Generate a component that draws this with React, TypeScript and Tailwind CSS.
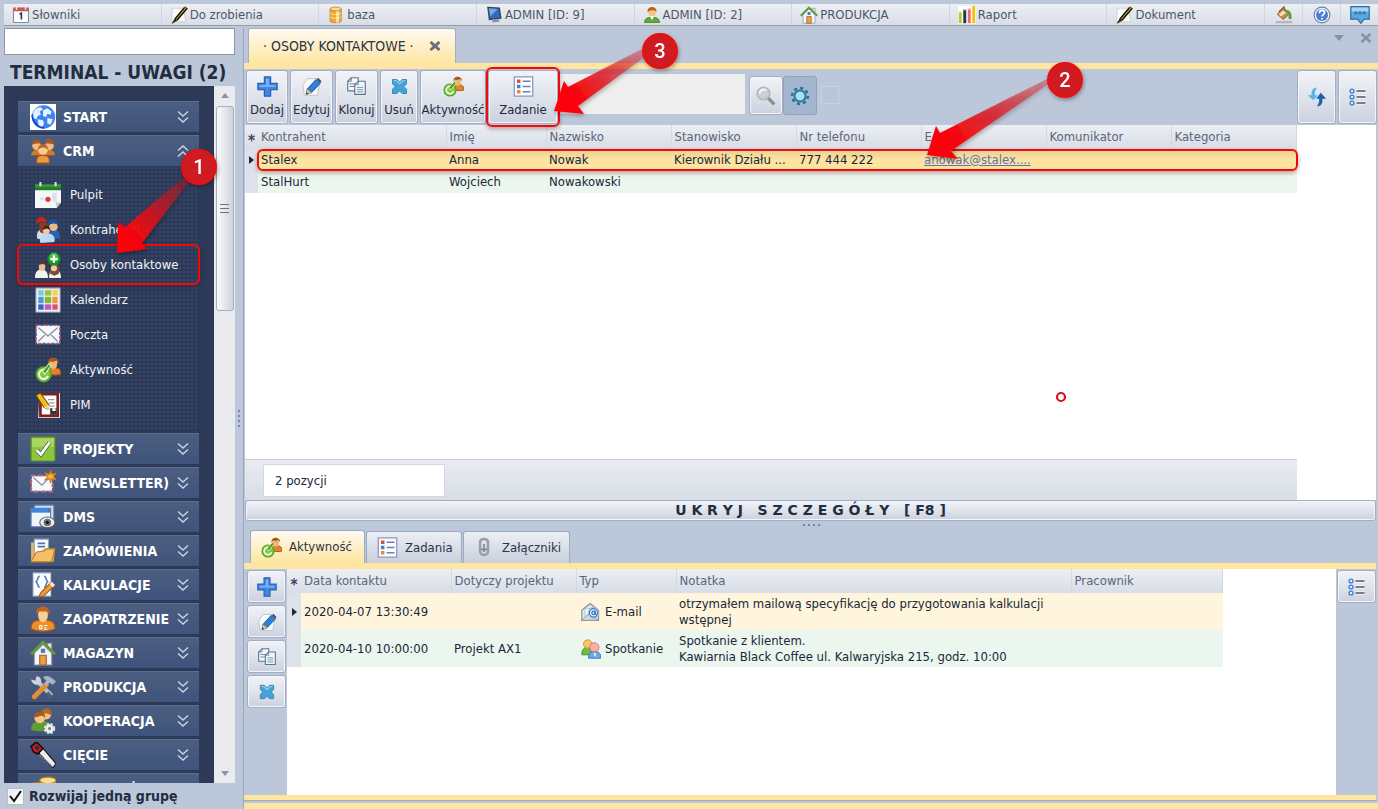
import type { ReactNode } from "react";
import clsx from "clsx";

type IconProps = { className?: string };

function Svg({ className = "size-6", children }: { className?: string; children: ReactNode }) {
    return (
        <svg viewBox="0 0 24 24" className={clsx("shrink-0", className)} fill="none" aria-hidden="true">
            {children}
        </svg>
    );
}

/* ---------- icons ---------- */

const CalendarPage = (p: IconProps) => (
    <Svg {...p}>
        <rect x="2" y="3" width="20" height="19" rx="1" fill="#fff" stroke="#7d8da8" strokeWidth="1.5" />
        <rect x="2" y="2" width="20" height="5" fill="#c8584c" />
        <path d="M6 1v4M18 1v4" stroke="#eee" strokeWidth="2" />
        <path d="M10 11l2.500-1.500V18" stroke="#2a3e66" strokeWidth="2.200" />
    </Svg>
);

const NotePen = (p: IconProps) => (
    <Svg {...p}>
        <path d="M3 3h15l3 18H2z" fill="#fafafa" stroke="#c3c7cd" />
        <path d="M20 1L7 16l-4 7 7-4L23 3z" fill="#e0b52c" stroke="#4a3a10" />
        <path d="M19.500 2L7 17M23 3L9 19" stroke="#17171a" strokeWidth="1.800" />
        <path d="M7 16l-4 7 6-4z" fill="#222" />
    </Svg>
);

const DbBarrel = (p: IconProps) => (
    <Svg {...p}>
        <path d="M4 4v16c0 3 15 3 15 0V4z" fill="#f0a93c" stroke="#c1791c" />
        <path d="M12 3h4v19h-4z" fill="#fbe0a0" />
        <ellipse cx="11.500" cy="4" rx="7.500" ry="2.500" fill="#ffd98a" stroke="#c1791c" />
        <path d="M4 9c0 3 15 3 15 0M4 14c0 3 15 3 15 0" stroke="#fff3d2" />
    </Svg>
);

const Monitor = (p: IconProps) => (
    <Svg {...p}>
        <path d="M4 2l15 1 2 13-15 2z" fill="#2e6cc4" stroke="#3a4254" strokeWidth="2" />
        <path d="M5 3l12 1-10 10z" fill="#6fa8ea" />
        <path d="M9 18l8-1 3 4-10 1z" fill="#8d97a8" />
    </Svg>
);

const UserGreen = (p: IconProps) => (
    <Svg {...p}>
        <path d="M2 22c0-6 5-7 10-7s10 1 10 7z" fill="#5fa83a" stroke="#3f7d24" />
        <path d="M9 13h6l-3 6z" fill="#fff" />
        <circle cx="12" cy="8" r="5.500" fill="#f4c48c" />
        <path d="M6 8c-1-9 13-9 12 0-2-3-8-3-12 0z" fill="#b9641f" />
    </Svg>
);

const House = (p: IconProps) => (
    <Svg {...p}>
        <path d="M16 3h4v6h-4z" fill="#e8ecf2" stroke="#8a93a5" />
        <path d="M4 12l8-8 8 8v11H4z" fill="#f4f6fb" stroke="#8d98ac" />
        <path d="M1 13L12 2l11 11" stroke="#5f9e2e" strokeWidth="2.500" />
        <path d="M10 8h4v4h-4z" fill="#4b7cc4" />
        <path d="M9 14h6v9H9z" fill="#e8a04a" stroke="#a5611c" />
    </Svg>
);

const ReportBars = (p: IconProps) => (
    <Svg {...p}>
        <path d="M0 0h24v24H0z" fill="#fff" />
        <path d="M3 7v16" stroke="#b5c832" strokeWidth="4" />
        <path d="M9 4v19" stroke="#223a48" strokeWidth="4" />
        <path d="M15 3v20" stroke="#ea6f66" strokeWidth="4" />
        <path d="M21 0v23" stroke="#f2c40f" strokeWidth="4" />
        <path d="M1 8h4M7 5h4M13 4h4" stroke="#fff" strokeWidth="1.500" />
    </Svg>
);

const PaintBucket = (p: IconProps) => (
    <Svg {...p}>
        <path d="M1 20h22v3H1z" fill="#b4b7bb" />
        <path d="M11 3l9 7-9 8-8-7z" fill="#c98b4a" stroke="#7a4a1c" />
        <path d="M5 8l7-7 2 8" stroke="#8c5a26" strokeWidth="1.500" />
        <path d="M13 5c6 0 10 3 9 12-1 1-3 1-4-1 1-5-1-7-5-8z" fill="#5ba12f" />
        <path d="M5 11l6-5 4 3-7 5z" fill="#f6dfb8" />
    </Svg>
);

const HelpBall = (p: IconProps) => (
    <Svg {...p}>
        <circle cx="12" cy="12" r="10.500" fill="#f1f5fb" stroke="#6c80ad" strokeWidth="1.500" />
        <circle cx="12" cy="12" r="8" fill="#4c7fd0" />
        <path d="M8.500 9.500c0-5 7-4.500 7-.5 0 2.500-3.500 2.500-3.500 5" stroke="#fff" strokeWidth="2.200" />
        <path d="M11 16h2.200v2H11z" fill="#fff" />
    </Svg>
);

const ChatBubble = (p: IconProps) => (
    <Svg {...p}>
        <path d="M1 2h22v15h-6l-4 5-4-5H1z" fill="#5ca8dc" stroke="#2d6ea6" strokeWidth="1.500" />
        <path d="M2 3h20v5H2z" fill="#a5d4f1" />
        <circle cx="7" cy="9.500" r="1.500" stroke="#1f5c96" />
        <circle cx="12" cy="9.500" r="1.500" stroke="#1f5c96" />
        <circle cx="17" cy="9.500" r="1.500" stroke="#1f5c96" />
    </Svg>
);

const PlusBlue = (p: IconProps) => (
    <Svg {...p}>
        <path d="M8.500 1h7v7.500H23v7h-7.500V23h-7v-7.500H1v-7h7.500z" fill="#4387e2" stroke="#2b62b8" strokeWidth="1.500" />
        <path d="M10.500 3h3v7.500H21v2H3v-2h7.500z" fill="#79b4f4" />
    </Svg>
);

const EditPage = (p: IconProps) => (
    <Svg {...p}>
        <path d="M7 3h11l3 6-2 13H4L2 11z" fill="#fafafa" stroke="#b9bdc4" />
        <path d="M17 4L7 15l-1 6 6-2L22 8.500z" fill="#2f80d8" stroke="#1d559c" />
        <path d="M6 21l1-6 5 4z" fill="#f0c489" />
        <path d="M18 4l4 4 1.500-2-4-4z" fill="#3f4f68" />
        <path d="M6 21l.5-2.500 2 1.700z" fill="#222" />
    </Svg>
);

const ClonePages = (p: IconProps) => (
    <Svg {...p}>
        <path d="M6 2h8v15H2V6z" fill="#f4f7fa" stroke="#5f7488" strokeWidth="1.300" />
        <path d="M6 2v4H2M4 9h7M4 12h6" stroke="#5f7488" />
        <path d="M14 6h8v15H10V10z" fill="#f4f7fa" stroke="#5f7488" strokeWidth="1.300" />
        <path d="M14 6v4h-4M12.500 13h7M12.500 15.500h7M12.500 18h7" stroke="#5b8db5" />
    </Svg>
);

const CrossBlue = (p: IconProps) => (
    <Svg {...p}>
        <path
            d="M4 4h5l3 3 3-3h5v5l-3 3 3 3v5h-5l-3-3-3 3H4v-5l3-3-3-3z"
            fill="#44a3d4"
            stroke="#2f81b0"
        />
        <path d="M5.500 5.500h3L12 9l3.500-3.500h3" stroke="#8fcdea" strokeWidth="1.500" />
    </Svg>
);

const Activity = (p: IconProps) => (
    <Svg {...p}>
        <path d="M11 15c0-5 3-5 6-5s7 0 7 6c-4 1-9 1-13-1z" fill="#e0852c" stroke="#a4530f" />
        <path d="M13 4c0-4 8-4 8 0l-1 5c-1 3-5 3-6 0z" fill="#eeb377" />
        <path d="M12 6c-1-7 10-7 10 0l-2-2.500-4 1-2-.5z" fill="#a5571e" />
        <circle cx="8" cy="16" r="7.500" fill="#58a828" />
        <circle cx="8" cy="16" r="6" fill="#86c844" />
        <path d="M11.500 13.500a4.300 4.300 0 1 0 .5 4" stroke="#f6fbef" strokeWidth="1.800" />
        <path d="M7 13l2 3 6-8-2-2z" fill="#4b9a22" stroke="#d9f0bd" />
    </Svg>
);

const TaskList = (p: IconProps) => (
    <Svg {...p}>
        <rect x="1.500" y="1" width="21" height="22" fill="#fdfdff" stroke="#8f9bc4" strokeWidth="1.500" />
        <path d="M4.500 4h4v4h-4z" fill="#d8503f" />
        <path d="M4.500 10h4v4h-4z" fill="#3b82d8" />
        <path d="M4.500 16h4v4h-4z" fill="#e88a2c" />
        <path d="M11 6h9M11 12h9M11 18h9" stroke="#6a7fc0" strokeWidth="1.700" />
    </Svg>
);

const Magnifier = (p: IconProps) => (
    <Svg {...p}>
        <path d="M14 14l8 8" stroke="#8b8f95" strokeWidth="4" />
        <circle cx="9" cy="9" r="7.500" fill="#cdd0d4" stroke="#b3b7bc" strokeWidth="2" />
        <path d="M4.500 9c0-4 4-6 8-4" stroke="#f4f5f6" strokeWidth="2.500" />
    </Svg>
);

const Gear = (p: IconProps) => (
    <Svg {...p}>
        <circle cx="12" cy="12" r="9.500" stroke="#1f7391" strokeWidth="3" strokeDasharray="3.500 3.960" />
        <circle cx="12" cy="12" r="6.500" fill="#c3d4e6" stroke="#2586a8" strokeWidth="3" />
        <circle cx="12" cy="12" r="4.800" stroke="#a9e0f0" />
    </Svg>
);

const Refresh = (p: IconProps) => (
    <Svg {...p}>
        <path d="M12 1C7 1 5 4 5.500 10H1l6.500 6L13 10H9.500C9 6 10 4 12 1z" fill="#57b4e6" />
        <path d="M12 23c5 0 7-3 6.500-9H23l-6.500-7L11 14h3.500c.5 4-.5 6-2.500 9z" fill="#1767ae" />
    </Svg>
);

const OptionsList = (p: IconProps) => (
    <Svg {...p}>
        <path d="M10 4h12M10 12h12M10 20h12" stroke="#fff" strokeWidth="4" />
        <path d="M10 4h12M10 12h12M10 20h12" stroke="#4e5361" strokeWidth="1.700" />
        <circle cx="4" cy="4" r="2.600" fill="#d9ecfd" stroke="#3c7fd0" strokeWidth="1.700" />
        <circle cx="4" cy="12" r="2.600" fill="#d9ecfd" stroke="#3c7fd0" strokeWidth="1.700" />
        <circle cx="4" cy="20" r="2.600" fill="#d9ecfd" stroke="#3c7fd0" strokeWidth="1.700" />
    </Svg>
);

const Globe = (p: IconProps) => (
    <Svg {...p}>
        <path d="M0 0h24v24H0z" fill="#fff" />
        <circle cx="12.500" cy="12" r="10.800" fill="#3f83f0" />
        <path d="M3 8c1-3 4-5 7-5l2 2-3 2 1 3-3 1-1 3-3-1zM12 6l4-2 4 3-1 3-3-1-1 3-3-1zM7 14l5 1 1 3-2 4-3-2zM16 13l5 1-2 5-3-1z" fill="#e4f1ff" />
        <path d="M2 10c0 6 5 12 11 12" stroke="#1744b4" strokeWidth="1.500" />
    </Svg>
);

const CrmGroup = (p: IconProps) => (
    <Svg {...p}>
        <path d="M1 16c0-4 3-5 6-5h10c3 0 6 1 6 5z" fill="#d9781d" />
        <path d="M6 23c0-6 2-7 6-7s6 1 6 7z" fill="#ef9a3c" stroke="#b0580f" />
        <circle cx="6" cy="7" r="4" fill="#f0bb83" />
        <circle cx="18" cy="7" r="4" fill="#f0bb83" />
        <circle cx="12" cy="11" r="4.500" fill="#f8cc97" />
        <path d="M2 6c0-6 8-6 8-1H6zM14 5c0-6 8-6 8 1l-4-1z" fill="#a45a22" />
        <path d="M7.500 11c-1-7 10-7 9 0-3-3-6-3-9 0z" fill="#b86a2c" />
    </Svg>
);

const GreenCalendar = (p: IconProps) => (
    <Svg {...p}>
        <path d="M0 3h24v16l-4 5H0z" fill="#f5f6f8" />
        <path d="M0 2h24v5.500H0z" fill="#2f9a36" />
        <path d="M0 5h24v2.500H0z" fill="#237a29" />
        <path d="M5 0v4M19 0v4" stroke="#d9dde2" strokeWidth="2" />
        <path d="M5 14h3v3H5zM16 10h4v8h-4z" fill="#e3dcec" />
        <circle cx="12" cy="16" r="2.500" fill="#cf3f44" />
        <path d="M24 19h-5l1 5z" fill="#c3c7cc" />
    </Svg>
);

const Contractors = (p: IconProps) => (
    <Svg {...p}>
        <path d="M2 20c-1-7 2-9 6-9l3 10z" fill="#d9dce4" />
        <path d="M13 20c0-7 2-9 5-9 4 0 5 5 5 9z" fill="#2b62b8" />
        <path d="M5 24c-2-6 2-9 6-9s8 2 7 8z" fill="#b9d9f4" />
        <path d="M4 7c0-3 6-3 7 0v5c-2 4-6 4-7 0z" fill="#8a3f28" />
        <circle cx="17" cy="9" r="4" fill="#edb98a" />
        <path d="M1 6c0-8 10-7 10-1L7 4z" fill="#d0211c" />
        <path d="M12 7c0-7 9-7 10 0l-5-1z" fill="#1f4f9e" />
        <ellipse cx="10.500" cy="12" rx="3.200" ry="4" fill="#f3c79e" />
        <path d="M7 12c0-6 7-6 7 0l-3-1.500z" fill="#4a2a16" />
    </Svg>
);

const Contacts = (p: IconProps) => (
    <Svg {...p}>
        <path d="M0 24c0-6 3-8 6-8s6 2 6 8zM13 24c0-6 2-8 5-8s6 2 6 8z" fill="#f2f2f2" />
        <ellipse cx="6.500" cy="13.500" rx="3" ry="4" fill="#e9bf9b" />
        <path d="M3 12c0-5 7-5 7 0l-3-1z" fill="#5b3a28" />
        <path d="M14 20c0-9 1-9 4-9s5 1 4 9l-4 2z" fill="#7a4d33" />
        <circle cx="17.500" cy="15" r="2.800" fill="#f0c8a6" />
        <circle cx="17.500" cy="6.500" r="6" fill="#16981f" />
        <circle cx="17.500" cy="5" r="4" fill="#44c44c" />
        <path d="M17.500 3v7M14 6.500h7" stroke="#fff" strokeWidth="2" />
    </Svg>
);

const ColorCalendar = (p: IconProps) => (
    <Svg {...p}>
        <path d="M1 1h22v22H1z" fill="#f1f3f8" stroke="#c0c8d8" />
        <path d="M3 3h5v5H3z" fill="#6fd0e4" />
        <path d="M9 3h6v5H9z" fill="#9bc840" />
        <path d="M16 3h5v5h-5z" fill="#f4d44c" />
        <path d="M3 9h5v6H3z" fill="#4b9ae4" />
        <path d="M9 9h6v6H9z" fill="#84b83c" />
        <path d="M16 9h5v6h-5z" fill="#f09a3c" />
        <path d="M3 16h5v5H3z" fill="#3c5fc0" />
        <path d="M9 16h6v5H9z" fill="#b85cc4" />
        <path d="M16 16h5v5h-5z" fill="#e2506a" />
    </Svg>
);

const Envelope = (p: IconProps) => (
    <Svg {...p}>
        <path d="M1 3h22v17H1z" fill="#f7f8fb" />
        <path d="M1 3h22v17H1z" stroke="#d0565a" strokeWidth="1.500" strokeDasharray="3 5" />
        <path d="M1 3h22v17H1z" stroke="#4b68b4" strokeWidth="1.500" strokeDasharray="3 5" strokeDashoffset="4" />
        <path d="M3 5l9 8 9-8M3 18l6-6M21 18l-6-6" stroke="#8a93a8" strokeWidth="1.200" />
    </Svg>
);

const Pim = (p: IconProps) => (
    <Svg {...p}>
        <path d="M4 1h19v23H3z" fill="#fff" />
        <path d="M5 2h16v20H5z" fill="#fff" stroke="#7c2020" strokeWidth="2.500" />
        <path d="M12 7h6M13 10h5M14 13h4" stroke="#9a9aa2" />
        <path d="M1 3l4-2 8 11-1 4-4-2z" fill="#f6bd18" stroke="#7a4e08" />
        <path d="M13 12l-5 2 6 3z" fill="#f0d4a8" />
        <path d="M14 15h6v6h-6z" fill="#33343c" />
        <path d="M16 15h3v2.500h-3z" fill="#fff" />
    </Svg>
);

const GreenCheck = (p: IconProps) => (
    <Svg {...p}>
        <rect x="1" y="1" width="22" height="22" rx="1" fill="#8cc63e" stroke="#5d9420" />
        <path d="M2 2h20v8H2z" fill="#aad663" />
        <path d="M6 13l4 4L18 6" stroke="#4f6b3a" strokeWidth="4" />
        <path d="M6 13l4 4L18 6" stroke="#fff" strokeWidth="2.500" />
    </Svg>
);

const Newsletter = (p: IconProps) => (
    <Svg {...p}>
        <path d="M1 5h20v15H1z" fill="#f7f8fb" />
        <path d="M1 5h20v15H1z" stroke="#d0565a" strokeWidth="2" strokeDasharray="3 4" />
        <path d="M1 5h20v15H1z" stroke="#4b68b4" strokeWidth="1.500" strokeDasharray="3 4" strokeDashoffset="3.500" />
        <path d="M3 7l8 7 7-7" stroke="#8a93a8" strokeWidth="1.200" />
        <path d="M19 0l1 4 4-1-2.500 3L24 9l-4-1-1 4-1-4-4 1 2.500-3L14 3l4 1z" fill="#f7b23b" stroke="#d07a12" />
    </Svg>
);

const Dms = (p: IconProps) => (
    <Svg {...p}>
        <path d="M4 1h18v15H4z" fill="#c9dcf2" stroke="#5a80b8" />
        <path d="M1 4h18v17H1z" fill="#eef4fb" stroke="#5a80b8" />
        <path d="M1 4h18v4H1z" fill="#3f86dc" />
        <path d="M17 6h1.500" stroke="#e03a2c" strokeWidth="2" />
        <ellipse cx="16" cy="17" rx="7" ry="5" fill="#f3f0ea" stroke="#6b5a4c" />
        <circle cx="16" cy="17" r="3.500" fill="#5d7694" />
        <circle cx="16" cy="17" r="1.500" fill="#111" />
    </Svg>
);

const FolderDoc = (p: IconProps) => (
    <Svg {...p}>
        <path d="M1 4h5v18H1z" fill="#e8b45c" />
        <path d="M4 1h13v16H4z" fill="#fafcff" stroke="#8fa3c4" />
        <path d="M7 5h7M7 8h7" stroke="#4f74b4" strokeWidth="1.500" />
        <path d="M13 10h10l-1 12H1z" fill="#e8a446" />
        <path d="M6 13l7-1 2-2h8l-3 12H1z" fill="#f3bf68" stroke="#bf7c20" />
    </Svg>
);

const Calculations = (p: IconProps) => (
    <Svg {...p}>
        <path d="M3 1h16v21H3z" fill="#fafcff" stroke="#c6d0e0" />
        <path d="M9 4c-3 0-1 5-4 5 3 0 1 5 4 5M13 4c3 0 1 5 4 5-3 0-1 5-4 5" stroke="#5a82b8" strokeWidth="1.500" />
        <path d="M20 9l3 3L13 22l-5 1 2-4z" fill="#ec9c3c" stroke="#a85f14" />
        <path d="M20 9l3 3-2 2-3-3z" fill="#f4ede4" />
    </Svg>
);

const Supplier = (p: IconProps) => (
    <Svg {...p}>
        <path d="M1 21c0-7 4-8 11-8s11 1 11 8c-5 3-17 3-22 0z" fill="#ec8f2c" stroke="#a8560c" />
        <ellipse cx="12" cy="8.500" rx="4.500" ry="6.500" fill="#f7cf96" />
        <path d="M6 8c-2-10 14-10 12 0l-2-3H8z" fill="#c0661c" />
        <path d="M9 18h2v3H9zM13 18h3M13 20h2M13 21.500h3" stroke="#fff" />
    </Svg>
);

const Tools = (p: IconProps) => (
    <Svg {...p}>
        <path d="M7 7l13 13" stroke="#b4bfcc" strokeWidth="4" />
        <path d="M1 5l4 1 1-4c4 0 5 4 4 7-3 2-8 1-9-4z" fill="#cdd6e0" />
        <path d="M20 22l-4-5" stroke="#55606e" strokeWidth="3" />
        <path d="M4 21L15 10" stroke="#e5902c" strokeWidth="4.500" strokeLinecap="round" />
        <path d="M12 3c4-3 8 0 12 4l-3 3-3-2-3 3-2-2 2-3z" fill="#a7b5c4" />
    </Svg>
);

const Cooperation = (p: IconProps) => (
    <Svg {...p}>
        <path d="M1 20c0-7 5-8 10-8s9 2 9 8c-5 2-14 2-19 0z" fill="#5f9c34" />
        <circle cx="15" cy="6" r="4.500" fill="#f1bf88" />
        <path d="M11 5c0-7 10-6 9 2l-4-2z" fill="#b56625" />
        <circle cx="9" cy="9" r="5" fill="#f4c48c" />
        <path d="M4 9c0-8 10-8 10 0l-3-2z" fill="#a9581c" />
        <circle cx="18" cy="19" r="4" fill="#eef1f4" stroke="#dfe3e8" strokeWidth="2.500" strokeDasharray="2 1.200" />
        <circle cx="18" cy="19" r="1.500" fill="#7b838c" />
    </Svg>
);

const Saw = (p: IconProps) => (
    <Svg {...p}>
        <path d="M7 9l5-3 12 14-3 4z" fill="#eceef0" stroke="#16181c" />
        <path d="M9 12l12 11" stroke="#8c9096" strokeDasharray="1.500 1" strokeWidth="1.500" />
        <path d="M1 4l5-4 6 6-5 5-4-2z" fill="#d4191c" stroke="#1c0a0a" strokeWidth="1.500" />
        <path d="M4 4l3-1 2 3-3 2z" fill="#24304c" />
    </Svg>
);

const Coins = (p: IconProps) => (
    <Svg {...p}>
        <path d="M9 4v10h15V4z" fill="#e8a93c" />
        <ellipse cx="16.500" cy="4" rx="7.500" ry="3" fill="#fbe08c" stroke="#b97714" />
        <path d="M0 9v12h14V9z" fill="#e8a93c" />
        <ellipse cx="7" cy="9" rx="7" ry="3" fill="#fbe08c" stroke="#b97714" />
    </Svg>
);

const Clip = (p: IconProps) => (
    <Svg {...p}>
        <path d="M7 16V6c0-5 9-5 9 0v10c0 6-9 6-9 0v-3" stroke="#9c9fa4" strokeWidth="3" />
        <path d="M11.500 8v9M8 14h7" stroke="#85888d" strokeWidth="2" />
    </Svg>
);

const MailAt = (p: IconProps) => (
    <Svg {...p}>
        <path d="M1 10l10-8 10 8v12H1z" fill="#e6e9ed" stroke="#8d95a0" strokeWidth="1.500" />
        <path d="M5 8h13v12H5z" fill="#fff" stroke="#b2b9c2" />
        <path d="M1 22l8-8 12 8z" fill="#d3d8de" stroke="#8d95a0" />
        <circle cx="15" cy="13" r="6.500" fill="#e3effb" stroke="#8fb2d8" />
        <circle cx="15" cy="13" r="5" stroke="#3f7fc4" strokeWidth="1.500" />
        <circle cx="15" cy="13" r="2" stroke="#2f6fb8" strokeWidth="1.500" />
        <path d="M17 10.500v4l2 .5" stroke="#2f6fb8" strokeWidth="1.300" />
    </Svg>
);

const Meeting = (p: IconProps) => (
    <Svg {...p}>
        <path d="M1 19c0-7 3-9 7-9s6 2 6 9z" fill="#6dbb45" stroke="#3f8a22" />
        <circle cx="8" cy="6" r="5" fill="#f6c56a" stroke="#d08a2c" />
        <path d="M9 23c0-7 3-8 7-8s8 1 8 8z" fill="#6fa8ec" stroke="#2f66b4" />
        <circle cx="16" cy="10" r="5.500" fill="#f7b3a8" stroke="#d4665c" />
        <path d="M15 17l2 5 1-5z" fill="#fff" />
    </Svg>
);

function Chevrons({ up }: { up?: boolean }) {
    return (
        <svg viewBox="0 0 12 14" className={clsx("h-3.5 w-3 shrink-0", up && "rotate-180")} fill="none" aria-hidden="true">
            <path d="M1 1.500l5 4.500 5-4.500M1 7.500l5 4.500 5-4.500" stroke="#c9d2e2" strokeWidth="1.500" />
        </svg>
    );
}

/* ---------- data ---------- */

const menu = [
    { label: "Słowniki", icon: CalendarPage },
    { label: "Do zrobienia", icon: NotePen },
    { label: "baza", icon: DbBarrel },
    { label: "ADMIN [ID: 9]", icon: Monitor },
    { label: "ADMIN [ID: 2]", icon: UserGreen },
    { label: "PRODUKCJA", icon: House },
    { label: "Raport", icon: ReportBars },
    { label: "Dokument", icon: NotePen },
];

const crmItems = [
    { label: "Pulpit", icon: GreenCalendar },
    { label: "Kontrahenci", icon: Contractors },
    { label: "Osoby kontaktowe", icon: Contacts, marked: true },
    { label: "Kalendarz", icon: ColorCalendar },
    { label: "Poczta", icon: Envelope },
    { label: "Aktywność", icon: Activity },
    { label: "PIM", icon: Pim },
];

const groups = [
    { label: "PROJEKTY", icon: GreenCheck },
    { label: "(NEWSLETTER)", icon: Newsletter },
    { label: "DMS", icon: Dms },
    { label: "ZAMÓWIENIA", icon: FolderDoc },
    { label: "KALKULACJE", icon: Calculations },
    { label: "ZAOPATRZENIE", icon: Supplier },
    { label: "MAGAZYN", icon: House },
    { label: "PRODUKCJA", icon: Tools },
    { label: "KOOPERACJA", icon: Cooperation },
    { label: "CIĘCIE", icon: Saw },
    { label: "SPRZEDAŻ", icon: Coins },
];

const toolbar = [
    { label: "Dodaj", icon: PlusBlue, width: "w-[42px]" },
    { label: "Edytuj", icon: EditPage, width: "w-[43px]" },
    { label: "Klonuj", icon: ClonePages, width: "w-[43px]" },
    { label: "Usuń", icon: CrossBlue, width: "w-[38px]" },
    { label: "Aktywność", icon: Activity, width: "w-[66px]" },
    { label: "Zadanie", icon: TaskList, width: "w-[70px]", marked: true },
];

const contactColumns = ["Kontrahent", "Imię", "Nazwisko", "Stanowisko", "Nr telefonu", "E-mail", "Komunikator", "Kategoria"];

const contacts = [
    ["Stalex", "Anna", "Nowak", "Kierownik Działu ...", "777 444 222", "anowak@stalex....", "", ""],
    ["StalHurt", "Wojciech", "Nowakowski", "", "", "", "", ""],
];

const detailTabs = [
    { label: "Aktywność", icon: Activity, width: "w-[115px]", active: true },
    { label: "Zadania", icon: TaskList, width: "w-24" },
    { label: "Załączniki", icon: Clip, width: "w-[107px]" },
];

const activityColumns = ["Data kontaktu", "Dotyczy projektu", "Typ", "Notatka", "Pracownik"];

const activities = [
    {
        date: "2020-04-07 13:30:49",
        project: "",
        type: "E-mail",
        icon: MailAt,
        note: ["otrzymałem mailową specyfikację do przygotowania kalkulacji", "wstępnej"],
    },
    {
        date: "2020-04-10 10:00:00",
        project: "Projekt AX1",
        type: "Spotkanie",
        icon: Meeting,
        note: ["Spotkanie z klientem.", "Kawiarnia Black Coffee ul. Kalwaryjska 215, godz. 10:00"],
    },
];

/* ---------- shared styles ---------- */

const raised =
    "rounded-[3px] border border-[#a3aec2] bg-linear-to-b from-[#f1f3f7] via-[#dfe3eb] to-[#cbd1df] shadow-[inset_0_0_0_1px_#f3f5f9]";
const headCell =
    "border-r border-[#d3d9e2] bg-linear-to-b from-[#eceff3] to-[#d7dce6] px-[3px] text-left font-normal text-[#5b6579] whitespace-nowrap";
const cornerCell = "bg-linear-to-b from-[#eceff3] to-[#d7dce6] pt-2 text-center text-[15px] leading-3 text-[#3c4557]";
const ring = "pointer-events-none absolute z-10 rounded-md border-2 border-[#f00a0e] shadow-[0_2px_4px_rgba(90,0,0,0.35)]";

/* ---------- parts ---------- */

function MenuBar() {
    return (
        <header className="ml-1 mt-1 flex h-[22px] shrink-0 border-b border-[#9a9fa6] bg-linear-to-b from-[#eceff3] to-[#d8dee8]">
            {menu.map(({ label, icon: Icon }, i) => (
                <button key={i} className="flex min-w-0 flex-1 items-center gap-0.5 border-r border-[#cfd6e0] pl-2 text-[#4d5668]">
                    <Icon className="size-[18px]" />
                    {label}
                </button>
            ))}
            <button aria-label="Kolory" className="flex w-[38px] items-center justify-center border-r border-[#cfd6e0]">
                <PaintBucket className="size-[18px]" />
            </button>
            <button aria-label="Pomoc" className="flex w-[38px] items-center justify-center border-r border-[#cfd6e0]">
                <HelpBall className="size-[18px]" />
            </button>
            <button aria-label="Wiadomości" className="flex w-[37px] items-center justify-center">
                <ChatBubble className="size-5" />
            </button>
        </header>
    );
}

function GroupHeader({ label, icon: Icon, open }: { label: string; icon: (p: IconProps) => ReactNode; open?: boolean }) {
    return (
        <button
            aria-expanded={!!open}
            className="flex h-[31px] w-full shrink-0 items-center border-t border-[#5b6d90] bg-linear-to-b from-[#4c5e80] to-[#3f547c] pl-3 pr-2.5 text-[14px] font-bold text-white"
        >
            <Icon className="size-[26px]" />
            <span className="flex-1 whitespace-nowrap pl-[7px] text-left">{label}</span>
            <Chevrons up={open} />
        </button>
    );
}

function Sidebar() {
    return (
        <aside className="flex w-[231px] shrink-0 flex-col">
            <input aria-label="Szukaj" className="h-[27px] shrink-0 border border-[#8f959d] bg-white px-1 outline-none" />
            <h1 className="h-[31px] shrink-0 whitespace-nowrap pl-[6px] text-[19px] leading-[34px] font-bold text-[#232d42]">
                TERMINAL - UWAGI (2)
            </h1>
            <div className="flex min-h-0 flex-1">
                <nav className="min-w-0 flex-1 overflow-hidden bg-[#2c3a58] pt-[15px] pr-[15px] pl-3.5">
                    <div className="flex flex-col gap-[3px]">
                        <GroupHeader label="START" icon={Globe} />
                        <GroupHeader label="CRM" icon={CrmGroup} open />
                        <ul className="-mt-[3px] bg-[radial-gradient(#37476a_1px,transparent_1px)] bg-size-[4px_4px] pt-[11px] pb-2">
                            {crmItems.map(({ label, icon: Icon, marked }) => (
                                <li key={label} className="relative">
                                    <a href="#" className="flex h-[35px] items-center gap-[9px] pl-[17px] text-[#f2f4f8]">
                                        <Icon className="size-[26px]" />
                                        {label}
                                    </a>
                                    {marked && <span className={clsx(ring, "-inset-x-px -inset-y-[3px]")} />}
                                </li>
                            ))}
                        </ul>
                        {groups.map((g) => (
                            <GroupHeader key={g.label} {...g} />
                        ))}
                    </div>
                </nav>
                <div className="flex w-[21px] flex-col items-center bg-[#e9ebee] py-[7px]">
                    <span className="size-0 border-x-4 border-b-[5px] border-x-transparent border-b-[#8d949f]" />
                    <div className="mt-2 flex h-[205px] w-[18px] flex-col items-center justify-center gap-[3px] rounded-[3px] border border-[#a7b0bf] bg-linear-to-r from-[#fafbfc] to-[#cdd3dd]">
                        <span className="h-px w-[9px] bg-[#6b7385]" />
                        <span className="h-px w-[9px] bg-[#6b7385]" />
                        <span className="h-px w-[9px] bg-[#6b7385]" />
                    </div>
                    <span className="mt-auto size-0 border-x-4 border-t-[5px] border-x-transparent border-t-[#8d949f]" />
                </div>
            </div>
            <label className="flex h-[26px] shrink-0 items-center gap-[5px] pl-[3px] text-[14px] font-bold text-[#232d42]">
                <span className="grid">
                    <input
                        type="checkbox"
                        defaultChecked
                        className="col-start-1 row-start-1 size-[17px] appearance-none border border-[#b5bdc9] bg-linear-to-br from-[#e8eaee] to-white"
                    />
                    <svg viewBox="0 0 17 17" className="pointer-events-none col-start-1 row-start-1 size-[17px]" fill="none" aria-hidden="true">
                        <path d="M3 8l4 5 7-10" stroke="#111" strokeWidth="2" />
                    </svg>
                </span>
                Rozwijaj jedną grupę
            </label>
        </aside>
    );
}

function DocumentTabs() {
    return (
        <div className="flex h-[35px] shrink-0 items-end justify-between pl-1 text-[#2c3447]">
            <div className="flex h-[35px] w-[208px] items-center justify-between rounded-t-[3px] border border-b-0 border-[#a3aec2] bg-linear-to-b from-[#fffaf0] via-[#fff0cb] to-[#fee5a0] px-3.5">
                <span className="text-[14px] whitespace-nowrap">· OSOBY KONTAKTOWE ·</span>
                <button aria-label="Zamknij kartę">
                    <svg viewBox="0 0 12 10" className="h-2.5 w-3" aria-hidden="true">
                        <path d="M1.500 1l9 8M10.500 1l-9 8" stroke="#6b7078" strokeWidth="3" />
                    </svg>
                </button>
            </div>
            <div className="flex h-full items-start gap-4 pt-[3px] pr-1.5">
                <button aria-label="Lista kart" className="pt-1">
                    <svg viewBox="0 0 10 6" className="h-1.5 w-2.5" aria-hidden="true">
                        <path d="M0 0h10L5 6z" fill="#8492ae" />
                    </svg>
                </button>
                <button aria-label="Zamknij" className="pt-0.5">
                    <svg viewBox="0 0 12 10" className="h-2.5 w-3" aria-hidden="true">
                        <path d="M1.500 1l9 8M10.500 1l-9 8" stroke="#8492ae" strokeWidth="2.800" />
                    </svg>
                </button>
            </div>
        </div>
    );
}

function Toolbar() {
    return (
        <div className="flex h-14 shrink-0 items-start gap-0.5 pt-px pl-0.5">
            {toolbar.map(({ label, icon: Icon, width, marked }) => (
                <div key={label} className={clsx("relative shrink-0", width)}>
                    <button
                        className={clsx(
                            raised,
                            "flex h-[54px] w-full flex-col items-center gap-1 pt-[5px] leading-[18px] whitespace-nowrap text-[#1f2a40]"
                        )}
                    >
                        <Icon className="size-[21px]" />
                        {label}
                    </button>
                    {marked && <span className={clsx(ring, "-inset-x-0.5 -inset-y-[3px]")} />}
                </div>
            ))}
            <input aria-label="Filtr" className="mt-1 h-10 w-[185px] bg-[#eeeeee] px-2 outline-none" />
            <button aria-label="Szukaj" className={clsx(raised, "mt-1.5 ml-0.5 flex h-[39px] w-[34px] items-center justify-center")}>
                <Magnifier className="size-5" />
            </button>
            <button
                aria-label="Ustawienia"
                className="mt-1.5 -ml-0.5 flex h-[39px] w-[34px] items-center justify-center rounded-[3px] border border-[#93a2bd] bg-[#a5b5cf]"
            >
                <Gear className="size-5" />
            </button>
            <input
                type="checkbox"
                aria-label="Filtruj automatycznie"
                className="mt-4 ml-0.5 size-[18px] appearance-none border border-[#c9d3e0] bg-[#b9c6d9]"
            />
            <div className="ml-auto flex gap-0.5 pr-px">
                <button aria-label="Odśwież" className={clsx(raised, "flex h-[54px] w-[39px] items-center justify-center")}>
                    <Refresh className="size-5" />
                </button>
                <button aria-label="Widok" className={clsx(raised, "flex h-[54px] w-[39px] items-center justify-center")}>
                    <OptionsList className="size-[18px]" />
                </button>
            </div>
        </div>
    );
}

function ContactsTable() {
    return (
        <section className="flex min-h-0 flex-1 flex-col bg-white pr-[79px]">
            <div className="relative">
                <table className="w-full table-fixed border-collapse">
                    <colgroup>
                        <col className="w-[13px]" />
                        <col className="w-[188px]" />
                        <col className="w-[100px]" />
                        <col className="w-[125px]" />
                        <col className="w-[125px]" />
                        <col className="w-[125px]" />
                        <col className="w-[125px]" />
                        <col className="w-[125px]" />
                        <col />
                    </colgroup>
                    <thead>
                        <tr className="h-6">
                            <th className={cornerCell}>*</th>
                            {contactColumns.map((c) => (
                                <th key={c} className={headCell}>
                                    {c}
                                </th>
                            ))}
                        </tr>
                    </thead>
                    <tbody>
                        {contacts.map((row, r) => (
                            <tr key={row[0]} className="h-[22px]">
                                <td className="bg-[#dde2ea] text-center">{r === 0 && <Pointer />}</td>
                                {row.map((cell, i) => (
                                    <td
                                        key={i}
                                        className={clsx(
                                            "px-[3px] whitespace-nowrap",
                                            r === 0 ? "bg-linear-to-b from-[#e6cf94] to-[#fde4a0] to-50%" : "bg-[#ebf6ee]",
                                            i === 5 ? "text-[#5a72b8]" : "text-[#20263a]"
                                        )}
                                    >
                                        {i === 5 && cell ? (
                                            <a href="#" className="underline">
                                                {cell}
                                            </a>
                                        ) : (
                                            cell
                                        )}
                                    </td>
                                ))}
                            </tr>
                        ))}
                    </tbody>
                </table>
                <span className={clsx(ring, "top-6 -right-px left-3 h-[22px]")} />
            </div>
            <footer className="mt-auto flex h-[41px] items-center border-t border-[#c5cbd6] bg-linear-to-b from-[#e9ecf1] to-[#d8dde6] pl-[18px]">
                <span className="h-[33px] w-[182px] rounded-[2px] border border-[#d3d7de] bg-white pl-[11px] leading-8 text-[#20263a]">
                    2 pozycji
                </span>
            </footer>
        </section>
    );
}

function Pointer() {
    return (
        <svg viewBox="0 0 5 8" className="mx-auto h-2 w-[5px]" aria-hidden="true">
            <path d="M0 0l5 4-5 4z" fill="#20263a" />
        </svg>
    );
}

function Details() {
    return (
        <section className="flex h-[280px] shrink-0 flex-col">
            <div className="-mt-px flex h-[10px] shrink-0 items-center justify-center gap-[3px]">
                {[0, 1, 2, 3].map((i) => (
                    <span key={i} className="size-0.5 bg-[#7385a8]" />
                ))}
            </div>
            <div className="flex h-[33px] shrink-0 items-end gap-px pl-1.5">
                {detailTabs.map(({ label, icon: Icon, width, active }) => (
                    <button
                        key={label}
                        className={clsx(
                            "flex items-center gap-[7px] rounded-t-[3px] border border-b-0 border-[#9caac2] pl-2.5 whitespace-nowrap text-[#2c3447]",
                            width,
                            active
                                ? "h-[33px] bg-linear-to-b from-[#fffaf0] to-[#fee5a0]"
                                : "h-8 bg-linear-to-b from-[#eceff4] to-[#c9d0dd]"
                        )}
                    >
                        <Icon className="size-[21px]" />
                        {label}
                    </button>
                ))}
            </div>
            <div className="mr-0.5 h-[6px] shrink-0 bg-[#fee5a0]" />
            <div className="flex min-h-0 flex-1">
                <div className="flex flex-col gap-0.5 px-[3px] pt-px pr-px">
                    {[PlusBlue, EditPage, ClonePages, CrossBlue].map((Icon, i) => (
                        <button
                            key={i}
                            aria-label={toolbar[i].label}
                            className={clsx(raised, "flex h-[33px] w-[39px] items-center justify-center")}
                        >
                            <Icon className="size-5" />
                        </button>
                    ))}
                </div>
                <div className="min-w-0 flex-1 bg-white pr-[113px]">
                    <table className="w-full table-fixed border-collapse text-[#20263a]">
                        <colgroup>
                            <col className="w-3.5" />
                            <col className="w-[150px]" />
                            <col className="w-[125px]" />
                            <col className="w-[100px]" />
                            <col className="w-[395px]" />
                            <col />
                        </colgroup>
                        <thead>
                            <tr className="h-6">
                                <th className={cornerCell}>*</th>
                                {activityColumns.map((c) => (
                                    <th key={c} className={headCell}>
                                        {c}
                                    </th>
                                ))}
                            </tr>
                        </thead>
                        <tbody>
                            {activities.map(({ date, project, type, icon: Icon, note }, i) => (
                                <tr key={date} className={clsx("h-[37px]", i === 0 ? "bg-[#fff5dc]" : "bg-[#ebf6ee]")}>
                                    <td className="bg-[#dde2ea]">{i === 0 && <Pointer />}</td>
                                    <td className="px-[3px]">{date}</td>
                                    <td className="px-[3px]">{project}</td>
                                    <td className="pl-[5px]">
                                        <span className="flex items-center gap-1">
                                            <Icon className="size-5" />
                                            {type}
                                        </span>
                                    </td>
                                    <td className="px-[3px] whitespace-nowrap">
                                        {note[0]}
                                        <br />
                                        {note[1]}
                                    </td>
                                    <td />
                                </tr>
                            ))}
                        </tbody>
                    </table>
                </div>
                <div className="pt-px pr-0.5 pl-px">
                    <button aria-label="Widok" className={clsx(raised, "flex h-[33px] w-[39px] items-center justify-center")}>
                        <OptionsList className="size-[18px]" />
                    </button>
                </div>
            </div>
            <div className="mr-0.5 h-[6px] shrink-0 border-b border-[#a3aec2] bg-[#fee5a0]" />
        </section>
    );
}

// numbered callouts drawn over the window
const callouts = [
    { n: 1, cx: 199, cy: 167, id: "c1", from: [187, 180], to: [130, 240], points: "117,253 118,222 125,227 185,176 189,182 142,243 147,249" },
    { n: 2, cx: 1065, cy: 80, id: "c2", from: [1049, 80], to: [950, 140], points: "927,155 936,126 940,133 1047,79 1050,83 951,151 958,159" },
    { n: 3, cx: 660, cy: 51, id: "c3", from: [645, 53], to: [574, 98], points: "554,111 564,81 568,87 642,49 646,56 578,106 584,114" },
];

function Callouts() {
    return (
        <svg className="pointer-events-none absolute inset-0 z-20 size-full font-[family-name:Roboto,sans-serif]" aria-hidden="true">
            <defs>
                <filter id="drop" x="-30%" y="-30%" width="160%" height="160%">
                    <feDropShadow dx="1" dy="2" stdDeviation="2" floodColor="#000" floodOpacity="0.35" />
                </filter>
                {callouts.map(({ id, from, to }) => (
                    <linearGradient key={id} id={id} gradientUnits="userSpaceOnUse" x1={from[0]} y1={from[1]} x2={to[0]} y2={to[1]}>
                        <stop offset="0" stopColor="#d8101a" stopOpacity="0.3" />
                        <stop offset="0.6" stopColor="#e2101a" stopOpacity="0.8" />
                        <stop offset="1" stopColor="#fb0307" />
                    </linearGradient>
                ))}
            </defs>
            {callouts.map(({ n, cx, cy, id, points }) => (
                <g key={n} filter="url(#drop)">
                    <polygon points={points} fill={`url(#${id})`} />
                    <circle cx={cx} cy={cy} r="17" fill="#cf1c22" stroke="#ee0b10" strokeWidth="2" />
                    <text x={cx} y={cy + 7} textAnchor="middle" fontSize="20" fontWeight="500" fill="#fff">
                        {n}
                    </text>
                </g>
            ))}
            <circle cx="1061" cy="397" r="4" fill="#fff" stroke="#d8121a" strokeWidth="2.200" />
        </svg>
    );
}

export default function App() {
    return (
        <div className="relative flex h-screen flex-col overflow-hidden bg-[#bcc8d9] font-[family-name:'DejaVu_Sans_Condensed','Noto_Sans',sans-serif] text-[13px] leading-4">
            <MenuBar />
            <div className="flex min-h-0 flex-1 pt-0.5 pl-1">
                <Sidebar />
                <div className="flex w-[9px] shrink-0 flex-col items-center justify-center gap-[3px] border-r border-[#98a6c0]">
                    {[0, 1, 2, 3].map((i) => (
                        <span key={i} className="size-0.5 bg-[#7385a8]" />
                    ))}
                </div>
                <main className="flex min-w-0 flex-1 flex-col">
                    <DocumentTabs />
                    <div className="h-[6px] shrink-0 bg-[#fee5a0]" />
                    <Toolbar />
                    <div className="flex min-h-0 flex-1 flex-col pr-0.5 pl-px">
                        <ContactsTable />
                        <button
                            className={clsx(
                                raised,
                                "h-[21px] shrink-0 text-center font-[family-name:'DejaVu_Sans',sans-serif] text-[14px] leading-[19px] font-bold whitespace-pre text-[#232d42]"
                            )}
                        >
                            U K R Y J   S Z C Z E G Ó Ł Y   [ F8 ]
                        </button>
                    </div>
                    <Details />
                    <div className="mt-0.5 h-[6px] shrink-0 bg-[#fee5a0]" />
                </main>
            </div>
            <Callouts />
        </div>
    );
}
